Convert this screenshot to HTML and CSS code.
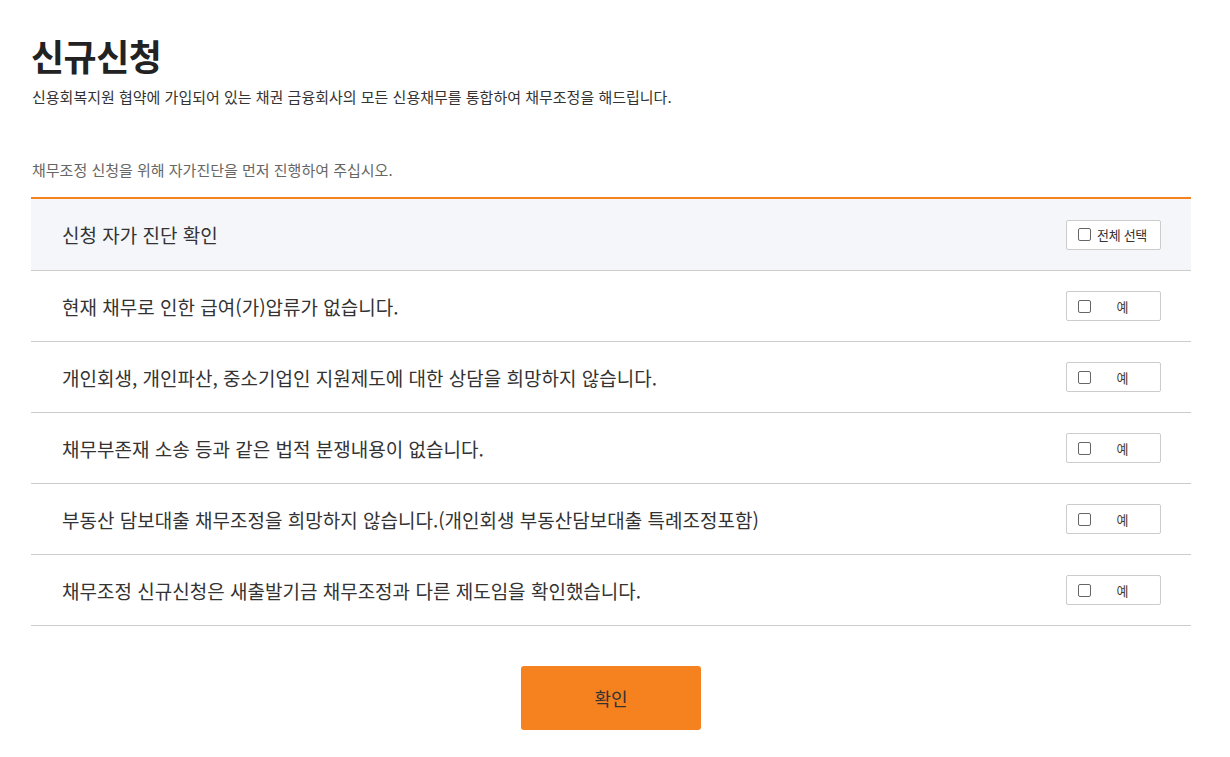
FILE: index.html
```
<!DOCTYPE html>
<html lang="ko">
<head>
    <meta charset="UTF-8">
    <meta name="viewport" content="width=device-width, initial-scale=1.0">
    <title>신규신청</title>
    <link rel="stylesheet" href="styles.css">
</head>
<body>

<div class="page">
    <h1 class="page-title">신규신청</h1>
    <p class="page-desc">신용회복지원 협약에 가입되어 있는 채권 금융회사의 모든 신용채무를 통합하여 채무조정을 해드립니다.</p>

    <p class="notice">채무조정 신청을 위해 자가진단을 먼저 진행하여 주십시오.</p>

    <div class="check-list">
        <div class="check-row check-head">
            <span class="check-text">신청 자가 진단 확인</span>
            <label class="check-btn all"><span class="box"></span><span class="label">전체 선택</span></label>
        </div>
        <div class="check-row">
            <span class="check-text">현재 채무로 인한 급여(가)압류가 없습니다.</span>
            <label class="check-btn"><span class="box"></span><span class="label">예</span></label>
        </div>
        <div class="check-row">
            <span class="check-text">개인회생, 개인파산, 중소기업인 지원제도에 대한 상담을 희망하지 않습니다.</span>
            <label class="check-btn"><span class="box"></span><span class="label">예</span></label>
        </div>
        <div class="check-row">
            <span class="check-text">채무부존재 소송 등과 같은 법적 분쟁내용이 없습니다.</span>
            <label class="check-btn"><span class="box"></span><span class="label">예</span></label>
        </div>
        <div class="check-row">
            <span class="check-text">부동산 담보대출 채무조정을 희망하지 않습니다.(개인회생 부동산담보대출 특례조정포함)</span>
            <label class="check-btn"><span class="box"></span><span class="label">예</span></label>
        </div>
        <div class="check-row">
            <span class="check-text">채무조정 신규신청은 새출발기금 채무조정과 다른 제도임을 확인했습니다.</span>
            <label class="check-btn"><span class="box"></span><span class="label">예</span></label>
        </div>
    </div>

    <div class="btn-area">
        <button class="btn-confirm">확인</button>
    </div>
</div>

</body>
</html>
```

FILE: styles.css
```
body {
    margin: 0;
    padding: 0;
    font-family: "Noto Sans CJK KR", "Noto Sans", sans-serif;
    color: #333;
    background: #fff;
}

.page {
    width: 1160px;
    margin-left: 31px;
}

.page-title {
    margin: 0;
    padding-top: 33px;
    font-size: 36px;
    line-height: 44px;
    font-weight: 700;
    letter-spacing: -0.5px;
    color: #222;
}

.page-desc {
    margin: 9px 0 0 1px;
    font-size: 15px;
    line-height: 22px;
    color: #333;
}

.notice {
    margin: 51px 0 0 1px;
    font-size: 15px;
    line-height: 22px;
    color: #666;
}

.check-list {
    margin-top: 16px;
    border-top: 2px solid #f5821f;
}

.check-row {
    display: flex;
    align-items: center;
    justify-content: space-between;
    height: 70px;
    padding: 0 30px 0 31px;
    border-bottom: 1px solid #ccc;
}

.check-head {
    height: 71px;
    background-color: #f5f6fa;
}

.check-text {
    font-size: 19px;
    color: #333;
}

.check-btn {
    display: flex;
    align-items: center;
    width: 95px;
    height: 30px;
    box-sizing: border-box;
    padding-left: 11px;
    background: #fff;
    border: 1px solid #ccc;
    border-radius: 2px;
    cursor: pointer;
}

.check-btn .box {
    width: 11px;
    height: 11px;
    border: 1px solid #666;
    border-radius: 2px;
    flex-shrink: 0;
}

.check-btn .label {
    flex: 1;
    text-align: center;
    font-size: 13px;
    color: #4a3a2a;
    padding-right: 6px;
}

.check-btn.all .label {
    flex: none;
    text-align: left;
    padding: 0 0 0 6px;
    color: #333;
    letter-spacing: -0.3px;
}

.btn-area {
    display: flex;
    justify-content: center;
    padding-top: 40px;
}

.btn-confirm {
    width: 180px;
    height: 64px;
    border: none;
    border-radius: 3px;
    background-color: #f5821f;
    color: #333;
    font-family: inherit;
    font-size: 18px;
    cursor: pointer;
}
```
